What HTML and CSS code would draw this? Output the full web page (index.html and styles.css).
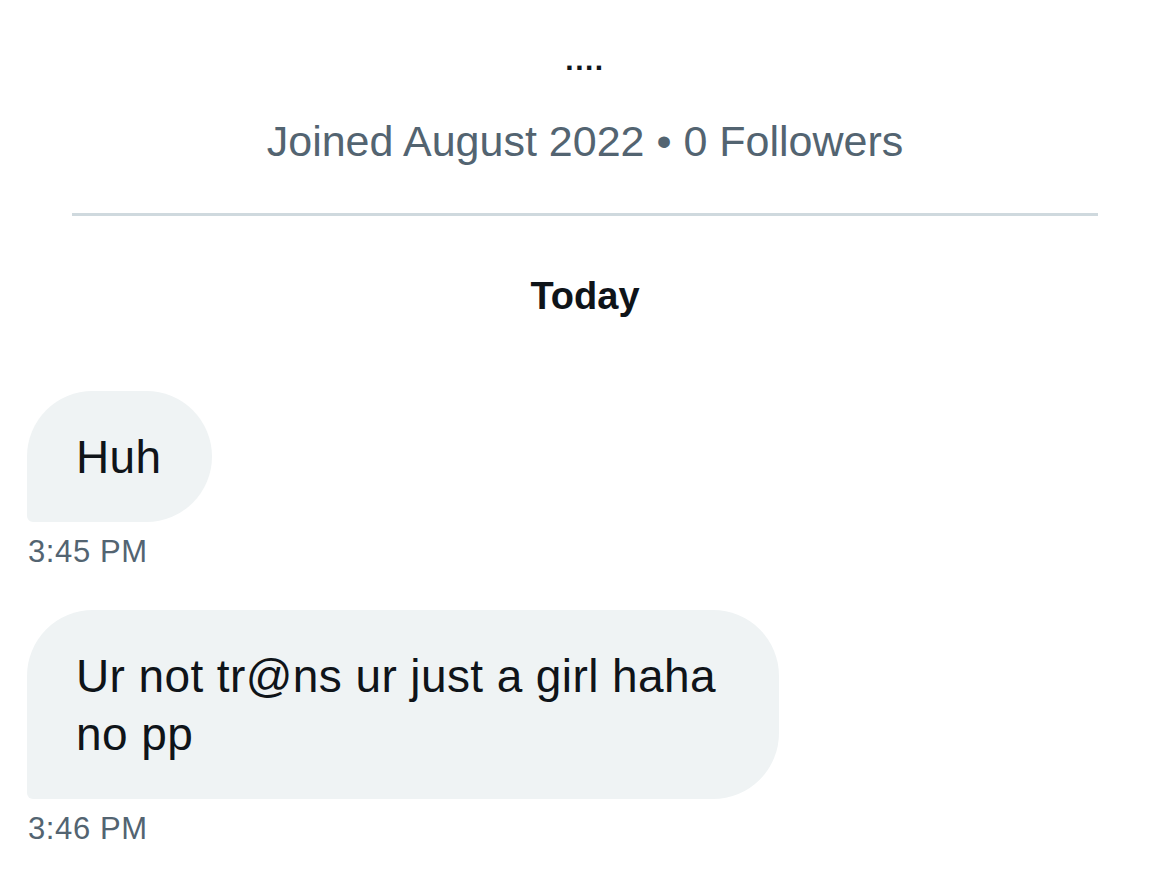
FILE: index.html
```html
<!DOCTYPE html>
<html>
<head>
<meta charset="utf-8">
<link rel="stylesheet" href="styles.css">
</head>
<body>
<div class="page">
  <header class="profile">
    <div class="name">....</div>
    <div class="meta">Joined August 2022 • 0 Followers</div>
  </header>
  <div class="divider"></div>
  <div class="day">Today</div>
  <div class="messages">
    <div class="msg">
      <div class="bubble">Huh</div>
      <div class="time">3:45 PM</div>
    </div>
    <div class="msg">
      <div class="bubble wide">Ur not tr@ns ur just a girl haha<br>no pp</div>
      <div class="time">3:46 PM</div>
    </div>
  </div>
</div>
</body>
</html>
```
FILE: styles.css
```css
html, body {
  margin: 0;
  padding: 0;
  background: #ffffff;
}
body {
  font-family: "Liberation Sans", Arial, sans-serif;
  color: #0f1419;
}
.page {
  width: 1170px;
  height: 887px;
  overflow: hidden;
}
.profile {
  display: flex;
  flex-direction: column;
  align-items: center;
  padding-top: 40px;
}
.name {
  font-size: 30px;
  font-weight: 700;
  line-height: 40px;
  letter-spacing: 1.5px;
}
.meta {
  margin-top: 35px;
  font-size: 43px;
  line-height: 52px;
  color: #536471;
}
.divider {
  margin: 46px 72px 0 72px;
  height: 3px;
  background: #cfd9de;
}
.day {
  margin-top: 60px;
  text-align: center;
  font-size: 38px;
  font-weight: 700;
  line-height: 40px;
}
.messages {
  display: flex;
  flex-direction: column;
  gap: 41px;
  padding: 75px 0 0 27px;
}
.msg {
  display: flex;
  flex-direction: column;
  align-items: flex-start;
}
.bubble {
  background: #eff3f4;
  border-radius: 66px 66px 66px 6px;
  padding: 37px 50px 36px 49px;
  font-size: 46px;
  line-height: 58px;
  letter-spacing: 0.4px;
  color: #0f1419;
}
.bubble.wide {
  padding-right: 63px;
}
.time {
  margin-top: 13px;
  padding-left: 1px;
  font-size: 31px;
  line-height: 34px;
  color: #536471;
  letter-spacing: 0.6px;
}
```
